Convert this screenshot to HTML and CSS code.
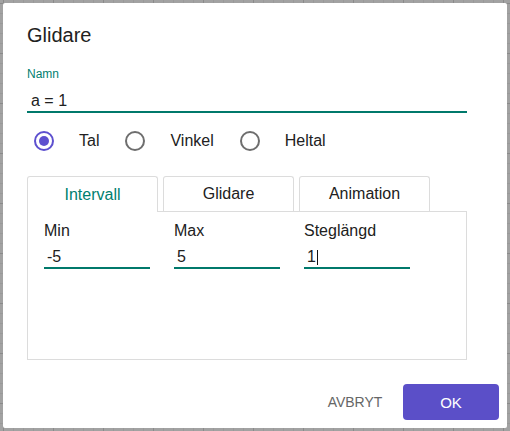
FILE: index.html
```html
<!DOCTYPE html>
<html lang="sv">
<head>
<meta charset="utf-8">
<title>Glidare</title>
<link rel="stylesheet" href="styles.css">
</head>
<body>
<div class="dialog">
  <div class="content">
    <h1 class="title">Glidare</h1>
    <div class="field">
      <div class="field-label">Namn</div>
      <div class="field-input">a = 1</div>
    </div>
    <div class="radios">
      <div class="radio-item"><span class="radio checked"></span><span class="radio-text">Tal</span></div>
      <div class="radio-item"><span class="radio"></span><span class="radio-text">Vinkel</span></div>
      <div class="radio-item"><span class="radio"></span><span class="radio-text">Heltal</span></div>
    </div>
    <div class="tabs">
      <div class="tab active">Intervall</div>
      <div class="tab">Glidare</div>
      <div class="tab">Animation</div>
    </div>
    <div class="panel">
      <div class="col">
        <div class="col-label">Min</div>
        <div class="col-input">-5</div>
      </div>
      <div class="col">
        <div class="col-label">Max</div>
        <div class="col-input">5</div>
      </div>
      <div class="col">
        <div class="col-label">Steglängd</div>
        <div class="col-input">1<span class="caret"></span></div>
      </div>
    </div>
  </div>
  <div class="footer">
    <button class="btn btn-text">AVBRYT</button>
    <button class="btn btn-primary">OK</button>
  </div>
</div>
</body>
</html>
```
FILE: styles.css
```css
html, body {
  margin: 0;
  padding: 0;
}
body {
  width: 510px;
  height: 431px;
  overflow: hidden;
  font-family: "Liberation Sans", Arial, Helvetica, sans-serif;
  background-color: #a2a2a2;
  background-image:
    linear-gradient(to right, #8a8a8a 1px, transparent 1px),
    linear-gradient(to bottom, #8a8a8a 1px, transparent 1px),
    linear-gradient(to right, #999 1px, transparent 1px),
    linear-gradient(to bottom, #999 1px, transparent 1px);
  background-size: 50px 50px, 50px 50px, 10px 10px, 10px 10px;
  background-position: 3px 3px, 3px 3px, 3px 3px, 3px 3px;
  padding: 3px;
  box-sizing: border-box;
}
.dialog {
  width: 504px;
  height: 425px;
  box-sizing: border-box;
  background: #fff;
  border-radius: 2px;
  display: flex;
  flex-direction: column;
  padding-top: 20px;
}
.content {
  padding: 0 40px 0 24px;
}
.title {
  margin: 0;
  font-size: 20px;
  line-height: 24px;
  font-weight: normal;
  color: #212121;
}
.field {
  margin-top: 20px;
}
.field-label {
  font-size: 12px;
  line-height: 14px;
  color: #00806f;
}
.field-input {
  margin-top: 8px;
  padding: 2px 4px 0;
  font-size: 16px;
  line-height: 20px;
  color: #212121;
  border-bottom: 2px solid #00796b;
}
.radios {
  margin-top: 8px;
  height: 40px;
  display: flex;
  align-items: center;
}
.radio-item {
  display: flex;
  align-items: center;
}
.radio {
  width: 20px;
  height: 20px;
  box-sizing: border-box;
  margin: 0 7px;
  border: 2px solid #6e6e6e;
  border-radius: 50%;
  display: flex;
  align-items: center;
  justify-content: center;
}
.radio.checked {
  border-color: #5d50cf;
}
.radio.checked::after {
  content: "";
  width: 10px;
  height: 10px;
  border-radius: 50%;
  background: #5d50cf;
}
.radio-text {
  margin-left: 18px;
  margin-right: 19px;
  font-size: 16px;
  line-height: 20px;
  color: #212121;
}
.tabs {
  margin-top: 15px;
  display: flex;
  gap: 5px;
  height: 35px;
}
.tab {
  width: 131px;
  height: 35px;
  box-sizing: border-box;
  border: 1px solid #dcdcdc;
  border-bottom: none;
  border-radius: 3px 3px 0 0;
  background: #fff;
  display: flex;
  align-items: center;
  justify-content: center;
  font-size: 16px;
  color: #212121;
}
.tab.active {
  position: relative;
  height: 36px;
  color: #00806f;
}
.panel {
  height: 149px;
  box-sizing: border-box;
  border: 1px solid #dcdcdc;
  padding: 9px 16px;
  display: grid;
  grid-template-columns: 106px 106px 106px;
  column-gap: 24px;
  align-content: start;
}
.col-label {
  font-size: 16px;
  line-height: 20px;
  color: #212121;
}
.col-input {
  margin-top: 6px;
  padding: 0 3px;
  font-size: 16px;
  line-height: 20px;
  color: #212121;
  border-bottom: 2px solid #00796b;
  display: flex;
  align-items: center;
}
.caret {
  display: inline-block;
  width: 1px;
  height: 15px;
  margin-left: 1px;
  background: #111;
}
.footer {
  margin-top: auto;
  padding: 0 8px 8px;
  display: flex;
  justify-content: flex-end;
  align-items: center;
}
.btn {
  font-family: "Liberation Sans", Arial, Helvetica, sans-serif;
  font-size: 14px;
  border: none;
  height: 36px;
  border-radius: 4px;
  cursor: pointer;
}
.btn-text {
  background: transparent;
  color: #666;
  min-width: 80px;
  margin-right: 8px;
  padding: 0 12px;
}
.btn-primary {
  background: #5b4fc8;
  color: #fff;
  width: 96px;
  font-size: 15px;
}
```
